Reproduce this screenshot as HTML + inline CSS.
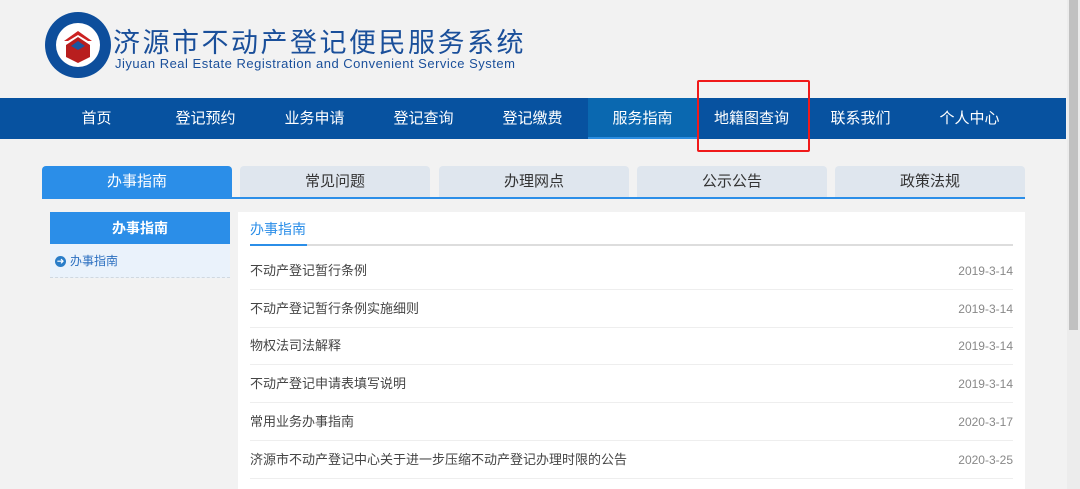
<!DOCTYPE html><html><head><meta charset="utf-8"><style>
*{margin:0;padding:0;box-sizing:border-box}
body{width:1080px;height:489px;overflow:hidden;background:#f2f2f2;font-family:"Liberation Sans","Noto Sans CJK SC",sans-serif;position:relative}
.abs{position:absolute}
.nav{left:0;top:98px;width:1066px;height:41px;background:#0752a0}
.nav div{position:absolute;top:0;height:41px;line-height:41px;color:#fff;font-size:15px;text-align:center;width:109px}
.tab{top:166px;height:32px;line-height:32px;width:190px;text-align:center;font-size:15px;color:#333;background:#dfe6ee;border-radius:4px 4px 0 0}
.row{left:250px;width:763px;height:38px;line-height:38px;font-size:13px;color:#444;border-bottom:1px solid #eee}
.row span{float:right;color:#888;font-size:12px}
</style></head><body>
<svg class="abs" style="left:44px;top:11px" width="68" height="68" viewBox="0 0 68 68">
<circle cx="34" cy="34" r="33" fill="#0d4e9c"/><circle cx="34" cy="34" r="22" fill="#fff"/>
<path d="M20 30 L34 20 L48 30 L44 30 L34 24 L24 30Z" fill="#c22"/>
<path d="M22 34 L34 26 L46 34 L46 46 L34 52 L22 46Z" fill="#b81e1e"/>
<path d="M27 35 L34 30 L41 35 L34 39Z" fill="#1a56a0"/>
</svg>
<div class="abs" style="left:113px;top:21px;font-size:27px;color:#1a4f9a;letter-spacing:2.5px;font-weight:normal">济源市不动产登记便民服务系统</div>
<div class="abs" style="left:115px;top:56px;font-size:13px;color:#1a4f9a;letter-spacing:0.5px">Jiyuan Real Estate Registration and Convenient Service System</div>
<div class="abs nav">
<div style="left:42px">首页</div><div style="left:151px">登记预约</div><div style="left:260px">业务申请</div><div style="left:369px">登记查询</div><div style="left:478px">登记缴费</div><div style="left:588px;background:#0a68b0;border-bottom:2px solid #2b8de0">服务指南</div><div style="left:697px">地籍图查询</div><div style="left:806px">联系我们</div><div style="left:915px">个人中心</div>
</div>
<div class="abs" style="left:697px;top:80px;width:113px;height:72px;border:2px solid #f01a1a;border-radius:2px"></div>
<div class="abs" style="left:1067px;top:0;width:13px;height:489px;background:#ececec"></div>
<div class="abs" style="left:1069px;top:0;width:9px;height:330px;background:#c1c1c1"></div>
<div class="abs tab" style="left:42px;background:#2b8ee8;color:#fff">办事指南</div>
<div class="abs tab" style="left:240px">常见问题</div>
<div class="abs tab" style="left:439px">办理网点</div>
<div class="abs tab" style="left:637px">公示公告</div>
<div class="abs tab" style="left:835px">政策法规</div>
<div class="abs" style="left:42px;top:197px;width:983px;height:2px;background:#2b8ee8"></div>
<div class="abs" style="left:50px;top:212px;width:180px;height:32px;line-height:32px;background:#2b8ee8;color:#fff;font-weight:bold;text-align:center;font-size:14px">办事指南</div>
<div class="abs" style="left:50px;top:244px;width:180px;height:34px;line-height:34px;background:#eaf2fb;border-bottom:1px dashed #d0d8e0;font-size:12px;color:#2b6fc0;padding-left:20px">办事指南</div>
<div class="abs" style="left:55px;top:256px;width:11px;height:11px;border-radius:50%;background:#2a7dc8;color:#fff;font-size:9px;line-height:11px;text-align:center">➜</div>
<div class="abs" style="left:238px;top:212px;width:787px;height:277px;background:#fff"></div>
<div class="abs" style="left:250px;top:218px;font-size:14px;color:#2b8ee8;line-height:22px">办事指南</div>
<div class="abs" style="left:250px;top:244px;width:763px;height:2px;background:#ddd"></div>
<div class="abs" style="left:250px;top:244px;width:57px;height:2px;background:#2b8ee8"></div>
<div class="abs row" style="top:252px">不动产登记暂行条例<span>2019-3-14</span></div>
<div class="abs row" style="top:290px">不动产登记暂行条例实施细则<span>2019-3-14</span></div>
<div class="abs row" style="top:327px">物权法司法解释<span>2019-3-14</span></div>
<div class="abs row" style="top:365px">不动产登记申请表填写说明<span>2019-3-14</span></div>
<div class="abs row" style="top:403px">常用业务办事指南<span>2020-3-17</span></div>
<div class="abs row" style="top:441px">济源市不动产登记中心关于进一步压缩不动产登记办理时限的公告<span>2020-3-25</span></div>
</body></html>
